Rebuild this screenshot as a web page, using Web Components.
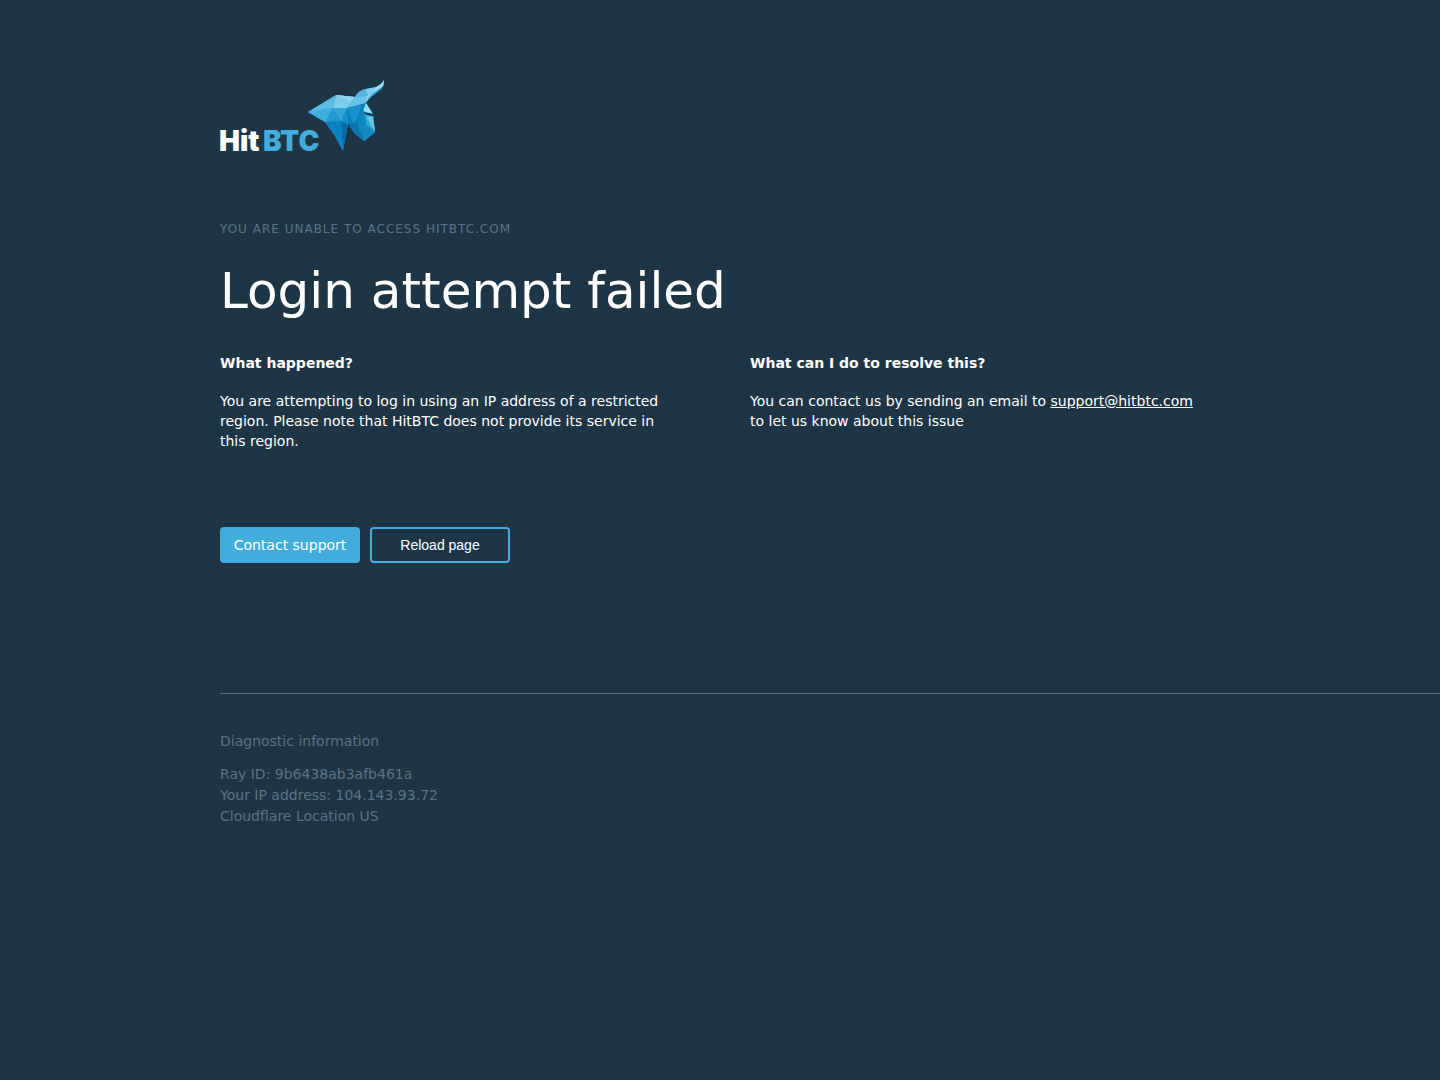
<!DOCTYPE html>
<html lang="en">
<head>
<meta charset="utf-8">
<title>Login attempt failed</title>
<style>
  html { background: #1e3545; }
  body { margin: 0; color: #fff; font: 14px/20px Verdana, "DejaVu Sans", sans-serif; }
</style>
</head>
<body>
<access-page>
  <brand-logo slot="logo"></brand-logo>
  <span slot="eyebrow">You are unable to access hitbtc.com</span>
  <span slot="title">Login attempt failed</span>
  <info-block>
    <span slot="heading">What happened?</span>
    You are attempting to log in using an IP address of a restricted region. Please note that HitBTC does not provide its service in this region.
  </info-block>
  <info-block>
    <span slot="heading">What can I do to resolve this?</span>
    You can contact us by sending an email to <mail-link address="support@hitbtc.com"></mail-link> to let us know about this issue
  </info-block>
  <page-actions slot="actions"></page-actions>
  <diagnostic-info slot="footer" ray="9b6438ab3afb461a" ip="104.143.93.72" location="US"></diagnostic-info>
</access-page>
<script>
class Base extends HTMLElement {
  constructor() {
    super();
    this.attachShadow({ mode: "open" });
  }
  connectedCallback() {
    this.shadowRoot.innerHTML = this.render();
  }
}

customElements.define("access-page", class extends Base {
  render() {
    return `<style>
      :host { display: block; padding: 80px 0 80px 220px; }
      header { display: flex; margin-bottom: 59px; }
      .eyebrow { margin: 0 0 22px; font-size: 12px; line-height: 20px; letter-spacing: 1px; text-transform: uppercase; color: #5a7383; }
      h1 { margin: 0 0 32px; font-size: 50px; line-height: 60px; font-weight: 400; }
      .columns { display: grid; grid-template-columns: repeat(2, minmax(0, 450px)); gap: 80px; min-height: 98px; margin-bottom: 76px; }
    </style>
    <header><slot name="logo"></slot></header>
    <main>
      <p class="eyebrow"><slot name="eyebrow"></slot></p>
      <h1><slot name="title"></slot></h1>
      <div class="columns"><slot></slot></div>
      <slot name="actions"></slot>
    </main>
    <slot name="footer"></slot>`;
  }
});

customElements.define("info-block", class extends Base {
  render() {
    return `<style>
      :host { display: block; }
      h2 { margin: 0 0 18px; font-size: 14px; line-height: 20px; font-weight: 700; }
      p { margin: 0; }
    </style>
    <h2><slot name="heading"></slot></h2><p><slot></slot></p>`;
  }
});

customElements.define("mail-link", class extends Base {
  render() {
    const address = this.getAttribute("address");
    return `<style>:host { display: inline; } a { color: inherit; text-decoration: underline; }</style><a href="mailto:${address}">${address}</a>`;
  }
});

customElements.define("page-actions", class extends Base {
  render() {
    return `<style>
      :host { display: flex; gap: 10px; margin-bottom: 130px; }
      a, button { box-sizing: border-box; width: 140px; height: 36px; padding: 0; border: 2px solid #42addc; border-radius: 4px; color: #fff; font-size: 14px; line-height: 32px; text-align: center; text-decoration: none; cursor: pointer; }
      a { background: #42addc; }
      button { background: transparent; font-family: "Liberation Sans", Arial, sans-serif; }
    </style>
    <a href="mailto:support@hitbtc.com">Contact support</a>
    <button type="button">Reload page</button>`;
  }
});

customElements.define("diagnostic-info", class extends Base {
  render() {
    const v = (name) => this.getAttribute(name);
    return `<style>
      :host { display: block; padding-top: 37px; border-top: 1px solid #5a7383; color: #5a7383; line-height: 21px; }
      p { margin: 0 0 12px; }
      ul { margin: 0; padding: 0; list-style: none; }
    </style>
    <p>Diagnostic information</p>
    <ul>
      <li>Ray ID: ${v("ray")}</li>
      <li>Your IP address: ${v("ip")}</li>
      <li>Cloudflare Location ${v("location")}</li>
    </ul>`;
  }
});

customElements.define("brand-logo", class extends Base {
  render() {
    return `<style>
      :host { display: block; }
      svg { display: block; overflow: visible; }
      text { font: 900 28px Inter, sans-serif; }
    </style>
    <svg width="165" height="80" viewBox="0 0 165 80" role="img" aria-label="HitBTC">
      <text x="-1" y="71" fill="#fff">Hit</text>
      <text x="43" y="71" fill="#42addc">BTC</text>
      <path fill="#259bd2" d="M88 32 116 15 135 17Q139 10 146 9L156 7Q161 5 164 0 165 7 160 10L150 18 146 23 153 34 155 52 144 61 135 54 128 44 123 71 115 56 105 42Z"/>
      <path fill="#5bbce4" d="M88 32 116 15 113 28Z"/>
      <path fill="#7ecced" d="M116 15 135 17 127 28 113 28Z"/>
      <path fill="#92d6f1" d="M116 15 135 17 130 22Z"/>
      <path fill="#42aede" d="M88 32 113 28 105 42Z"/>
      <path fill="#2098d4" d="M105 42 113 28 121 41Z"/>
      <path fill="#32a4d9" d="M113 28 127 28 121 41Z"/>
      <path fill="#69c2e8" d="M135 17Q139 10 146 9L147 20 144 24 127 28Z"/>
      <path fill="#80cdef" d="M146 9 156 7 152 15 146 22Z"/>
      <path fill="#56b6e2" d="M135 17Q139 10 146 9L148 16Z"/>
      <path fill="#a1def6" d="M156 7Q161 5 164 0L163 6 152 14Z"/>
      <path fill="#45aadb" d="M152 14 163 6Q162 9 158 11L147 20Z"/>
      <path fill="#0b82c2" d="M105 42 121 41 123 71 115 56Z"/>
      <path fill="#086da7" d="M121 41 128 44 123 71Z"/>
      <path fill="#1690cb" d="M121 41 127 28 128 44Z"/>
      <path fill="#0b7db9" d="M127 28 146 23 142 42 128 44Z"/>
      <path fill="#1891cb" d="M127 28 142 25 134 46Z"/>
      <path fill="#0973ad" d="M128 44 142 42 144 61 135 54Z"/>
      <path fill="#0c87c0" d="M145 24 146 43 144 61 137 44Z"/>
      <path fill="#35a9d8" d="M145 30 153 36 155 52 144 61 146 43Z"/>
      <path fill="#94dbf3" d="M146 23 153 34 143 31Z"/>
      <path fill="#1e3545" d="M143 32 153 34 153 36 147 35Z"/>
      <path fill="#6cc2e2" d="M146 36 153 37 155 52Z"/>
      <path fill="#168ac0" d="M146 44 155 52 144 61Z"/>
    </svg>`;
  }
});
</script>
</body>
</html>
